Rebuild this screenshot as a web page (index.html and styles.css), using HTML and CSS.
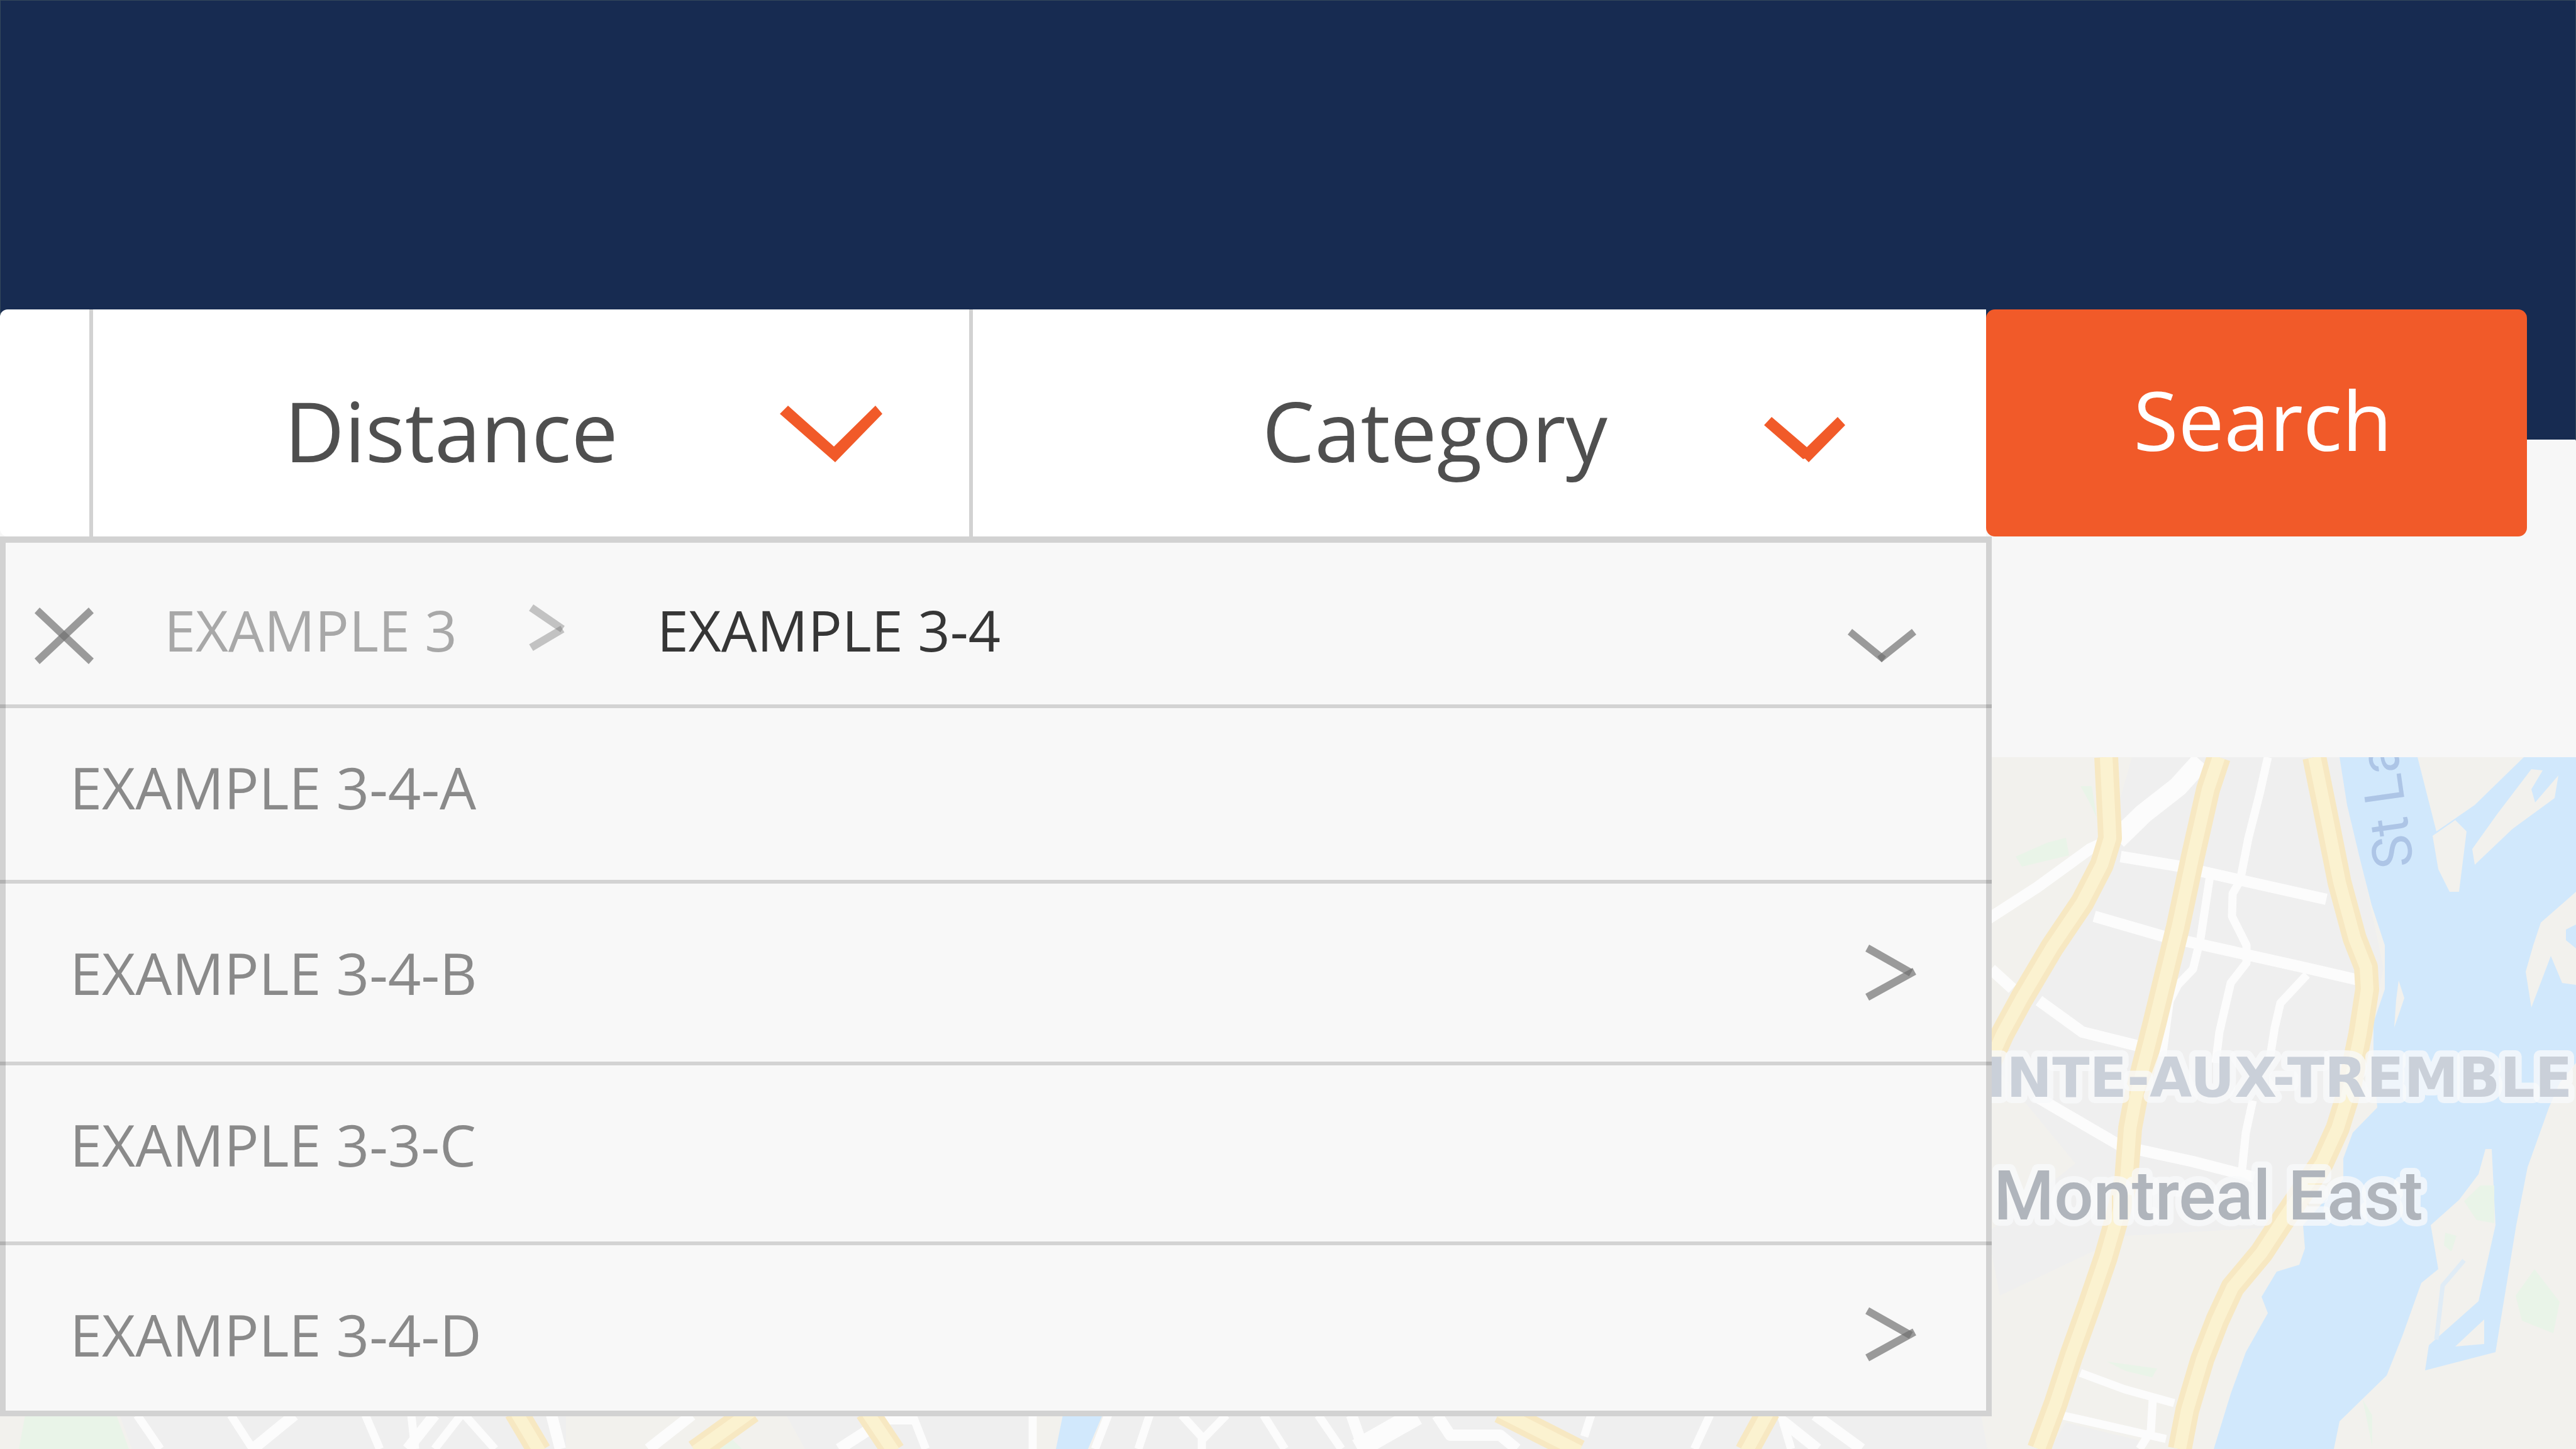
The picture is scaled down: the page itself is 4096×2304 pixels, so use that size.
FILE: index.html
```html
<!DOCTYPE html>
<html lang="en">
<head>
<meta charset="utf-8">
<title>Category search</title>
<link rel="stylesheet" href="styles.css">
</head>
<body>
<div class="page">
  <header class="hero"></header>

  <section class="map" aria-label="Map">
    <svg class="map-canvas" viewBox="0 1204 4096 1100" preserveAspectRatio="xMinYMin slice">
      <rect class="land" x="0" y="1204" width="4096" height="1100"/>
      <!-- built-up areas -->
      <path class="urban" d="M3390 1204H3720L3790 1540L3740 1760L3640 1950L3380 1965L3180 2060L3160 1960L3300 1850L3160 1680L3340 1380Z"/>
      <path class="urban" d="M190 2250H900V2304H210ZM1250 2250H1640V2304H1280ZM1760 2250H3150L3160 2304H1740Z"/>
      <path class="urban" d="M3285 2262L3400 2290V2304H3260Z"/>
      <!-- parks -->
      <path class="park" d="M40 2250H185L205 2304H30ZM3255 1340L3285 1332L3290 1360L3215 1378L3205 1362ZM3308 1250H3326L3334 1300L3322 1275ZM3350 2165L3430 2176L3422 2190L3380 2180ZM4000 2060L4030 2018L4070 2070L4060 2120L4010 2100ZM3757 2226L3772 2250V2300ZM1150 2275L1120 2304H1180Z"/>
      <!-- river -->
      <path class="water" d="M3720 1204L3732 1280L3753 1368L3771 1439L3792 1503V1573L3774 1626V1687L3780 1761L3741 1801L3726 1842V1875L3662 1948L3665 1985L3656 2011L3620 2022L3596 2062L3606 2088L3571 2150L3547 2216L3520 2304H3711L3720 2260L3795 2187L3820 2124L3850 2040L3877 2018L3865 1948L3910 1908L3941 1867L3952 1827H3962L3968 1948L3941 2069L3862 2139L3856 2179L3968 2150L3986 2040L4001 1948L4019 1856L4053 1761L4070 1722L4096 1690V1566L4074 1563L4056 1520L4025 1602L4016 1545L4028 1503L4040 1467L4096 1418V1204H4013L3935 1280L3874 1322L3844 1204Z"/>
      <path class="water" d="M1690 2250H1753L1730 2304H1679ZM4096 1470L4080 1478V1495L4096 1508Z"/>
      <path class="creek" d="M3918 2004L3884 2044L3874 2130"/>
      <path class="land" d="M3868 1329L3904 1304L3922 1322L3910 1418H3895L3877 1382ZM4025 1223L4043 1225L4025 1255L4031 1276L4068 1233L4062 1269L3995 1318L3935 1375L3931 1350L3971 1294ZM3814 1559L3823 1587L3807 1634L3810 1590ZM3950 2098V2137L3904 2141Z"/>
      <path class="park" d="M3944 1885H3966V1945L3938 1940L3918 1910ZM3888 1960L3906 1965L3898 1990L3886 1980Z"/>
      <!-- streets -->
      <g class="street">
        <path class="wide" d="M3500 1210L3463 1251L3408 1294L3366 1335"/>
        <path d="M3378 1325L3323 1350L3239 1411L3160 1462M3166 1541L3200 1572M3372 1362L3463 1377L3565 1400L3699 1430M3330 1457L3444 1490L3487 1499L3662 1538L3753 1559M3242 1591L3311 1641L3408 1665M3235 1742L3293 1776L3372 1822L3487 1847L3584 1872"/>
        <path class="thin" d="M3606 1204L3593 1262L3575 1333L3562 1400L3550 1421L3549 1457L3572 1503V1531L3547 1563L3529 1641L3523 1690M3514 1393L3499 1492L3487 1541L3463 1566L3450 1591L3438 1680M3668 1550L3626 1595L3617 1634L3608 1690M3582 1750L3571 1801L3565 1860M3308 2183L3378 2209L3457 2231M3281 2251L3444 2288M3423 2225L3420 2275L3402 2304"/>
        <path class="thin" d="M218 2250L255 2304M367 2250L402 2304M581 2250L604 2304M654 2250L660 2304M739 2250L787 2304M733 2250L691 2304M1451 2250L1472 2304M1642 2250V2304M1762 2250L1741 2304M1828 2250L1810 2304M1879 2250L1911 2285V2304M1950 2250L1911 2290M2009 2250L2043 2304M2096 2250L2133 2304M2530 2250L2519 2284M2719 2250L2694 2304M2832 2250L2848 2304"/>
        <path d="M468 2250L402 2304M691 2250L648 2304M877 2250L891 2304M1100 2250L1031 2304M1382 2273L1334 2304M1400 2256H1451M2149 2250L2168 2304M2285 2250L2306 2282H2385L2412 2304M2886 2250L2960 2304M2835 2260L2890 2304"/>
        <path class="wide" d="M2253 2250L2158 2304"/>
      </g>
      <!-- main roads: casing, then the fill -->
      <g class="road-casing">
        <path d="M3349 1204L3354 1308L3355 1333L3342 1375L3311 1435L3263 1506L3215 1587L3184 1644L3150 1720"/>
        <path d="M3528 1204L3511 1255L3487 1361L3463 1474L3450 1527L3426 1626L3408 1697L3396 1746L3387 1794L3381 1875L3367 1934L3348 2000L3323 2073L3293 2157L3269 2231L3242 2304"/>
        <path d="M3680 1204L3696 1283L3720 1403L3744 1492L3762 1538L3764 1573L3753 1644L3732 1746L3717 1794L3692 1849L3632 1937L3596 1992L3550 2047L3526 2099L3502 2161L3478 2242L3466 2304"/>
        <path d="M820 2244L858 2308M1195 2244L1106 2308M1378 2244L1421 2308M2385 2244L2511 2308M2812 2244L2777 2308"/>
      </g>
      <g class="road">
        <path d="M3349 1204L3354 1308L3355 1333L3342 1375L3311 1435L3263 1506L3215 1587L3184 1644L3150 1720"/>
        <path d="M3528 1204L3511 1255L3487 1361L3463 1474L3450 1527L3426 1626L3408 1697L3396 1746L3387 1794L3381 1875L3367 1934L3348 2000L3323 2073L3293 2157L3269 2231L3242 2304"/>
        <path d="M3680 1204L3696 1283L3720 1403L3744 1492L3762 1538L3764 1573L3753 1644L3732 1746L3717 1794L3692 1849L3632 1937L3596 1992L3550 2047L3526 2099L3502 2161L3478 2242L3466 2304"/>
        <path d="M820 2244L858 2308M1195 2244L1106 2308M1378 2244L1421 2308M2385 2244L2511 2308M2812 2244L2777 2308"/>
      </g>
      <!-- place names -->
      <text class="river-name" transform="translate(3838 1376) rotate(-98)">St La</text>
      <text class="district" x="3158" y="1744">INTE-AUX-TREMBLE</text>
      <text class="town" x="3170" y="1939">Montreal East</text>
    </svg>
  </section>

  <main class="finder">
    <div class="field field-start"></div>
    <label class="field field-distance">
      <select class="field-select" aria-label="Distance"><option>Distance</option></select>
      <svg class="chevron-large" viewBox="1240 646 163 90" aria-hidden="true"><path d="M1240 659L1253 646L1326 711L1392 646L1403 659L1328 736Z"/></svg>
    </label>
    <button class="field field-category" type="button" aria-expanded="true">
      <span>Category</span>
      <svg class="chevron-medium" viewBox="2805 664 129 72" aria-hidden="true"><path d="M2805 677L2817 664L2873 712L2922 664L2934 677L2876 736L2870 730L2867 731Z"/></svg>
    </button>
    <button class="search" type="submit">Search</button>

    <nav class="panel" aria-label="Categories">
      <div class="row crumbs">
        <button class="icon-button" type="button" aria-label="Close"><svg class="close" viewBox="55 967 94 90"><path d="M55 976L63 967L149 1048L141 1057Z"/><path d="M149 976L141 967L55 1048L63 1057Z"/></svg></button>
        <a class="crumb" href="#">EXAMPLE 3</a>
        <svg class="crumb-arrow" viewBox="189 171 276 360" aria-hidden="true"><path d="M189 221L223 171L465 338L432 386Z"/><path d="M190 480L221 531L463 387L433 336Z"/></svg>
        <a class="crumb current" href="#" aria-current="page">EXAMPLE 3-4</a>
        <button class="icon-button collapse" type="button" aria-label="Collapse"><svg class="chevron-small" viewBox="2939 1001 109 53"><path d="M2939 1010L2946 1001L3000 1045L2993 1054Z"/><path d="M3048 1010L3041 1001L2986 1045L2993 1054Z"/></svg></button>
      </div>
      <a class="row item" href="#">EXAMPLE 3-4-A</a>
      <a class="row item branch" href="#">EXAMPLE 3-4-B
        <svg class="arrow" viewBox="168 98 393 433" aria-hidden="true"><path d="M168 151L197 98L535 290L506 342Z"/><path d="M168 479L197 531L561 330L533 278Z"/></svg>
      </a>
      <a class="row item" href="#">EXAMPLE 3-3-C</a>
      <a class="row item branch" href="#">EXAMPLE 3-4-D
        <svg class="arrow" viewBox="168 99 393 433" aria-hidden="true"><path d="M168 159L197 107L535 299L506 351Z"/><path d="M168 473L197 525L561 324L533 272Z"/></svg>
      </a>
    </nav>
  </main>
</div>
</body>
</html>
```
FILE: styles.css
```css
* {
  box-sizing: border-box;
}

body {
  margin: 0;
  background: #f7f7f7;
  font-family: "Open Sans", "Noto Sans", sans-serif;
}

.page {
  display: grid;
  grid-template-rows: 701px 503px minmax(1100px, 1fr);
  min-height: 100vh;
  overflow: hidden;
}

.hero {
  grid-area: 1 / 1;
  background: #172b51;
  border: 1px solid #35485a;
  border-bottom: 2px solid #ffffff;
}

.map {
  grid-area: 3 / 1;
  display: flex;
  min-height: 0;
  border-bottom: 1px solid #aaaaaa;
}

.map-canvas {
  width: 100%;
  height: 100%;
}

.land { fill: #f2f1ed; }
.urban { fill: #efefef; }
.park { fill: #e9f4e8; }
.water { fill: #d1e8fc; }

.creek {
  fill: none;
  stroke: #e0ecf6;
  stroke-width: 7;
}

.street {
  fill: none;
  stroke: #fcfcfc;
  stroke-width: 18;
  stroke-linejoin: round;
}

.street .wide { stroke-width: 32; }
.street .thin { stroke-width: 13; }

.road-casing,
.road {
  fill: none;
  stroke: #f7e8c2;
  stroke-width: 38;
  stroke-linejoin: round;
}

.road {
  stroke: #fbf2d0;
  stroke-width: 20;
}

.river-name,
.district,
.town {
  font-family: Roboto, sans-serif;
}

.river-name {
  fill: #adc5e6;
  font-size: 88px;
}

.district,
.town {
  stroke: #f8fafb;
  stroke-opacity: 0.75;
  stroke-width: 20px;
  stroke-linejoin: round;
  paint-order: stroke;
}

.district {
  fill: #cad0d9;
  font-family: "DejaVu Sans", sans-serif;
  font-size: 87px;
  font-weight: 700;
}

.town {
  fill: #b0b5bc;
  font-size: 110px;
  font-weight: 500;
}

.finder {
  grid-area: 1 / 1 / 4 / 2;
  display: grid;
  grid-template-columns: 148px 1399fr 1611fr 860fr;
  grid-template-rows: 361px auto;
  align-content: start;
  padding: 492px 78px 0 0;
  z-index: 1;
}

.field {
  display: flex;
  align-items: baseline;
  justify-content: space-between;
  margin: 0;
  padding: 99px 0 0;
  border: 0;
  border-right: 6px solid #d2d2d2;
  background: #ffffff;
  color: #4f4f4f;
  font: inherit;
  font-size: 132px;
  line-height: 187px;
  text-align: left;
}

.field-start {
  border-radius: 12px 0 0 12px;
}

.field-distance {
  padding-right: 138px;
  padding-left: 304px;
}

.field-category {
  padding-right: 224px;
  padding-left: 460px;
  border-right: 0;
}

.field-select {
  padding: 0;
  border: 0;
  background: none;
  appearance: none;
  color: inherit;
  font: inherit;
}

.chevron-large,
.chevron-medium {
  flex: none;
  fill: #f15a29;
}

.chevron-large { width: 163px; height: 90px; }
.chevron-medium { width: 129px; height: 72px; }

.search {
  padding: 0 0 12px 20px;
  border: 0;
  border-radius: 14px;
  background: #f15a29;
  color: #ffffff;
  font: inherit;
  font-size: 130px;
  line-height: 187px;
}

.panel {
  grid-column: 1 / 4;
  display: grid;
  grid-template-rows: 263px 279px 289px 286px 263px;
  margin-right: -9px;
  border: 9px solid #d2d2d2;
  border-top-width: 10px;
  background: #f8f8f8;
}

.row {
  display: flex;
  margin: 0 -9px;
  padding: 64px 120px 0 111px;
  border-bottom: 6px solid rgba(0, 0, 0, 0.15);
  color: #8a8a8a;
  font-size: 92px;
  line-height: 124px;
  text-decoration: none;
}

.row:last-child {
  border-bottom: 0;
}

.item {
  align-items: flex-start;
  justify-content: space-between;
}

.branch {
  padding-top: 80px;
}

.crumbs {
  align-items: flex-start;
  padding: 76px 120px 0 55px;
  font-size: 90px;
}

.crumb {
  color: #a8a8a8;
  text-decoration: none;
}

.current {
  color: #363636;
}

.icon-button {
  display: flex;
  align-items: flex-end;
  height: 124px;
  margin: 0;
  padding: 0 0 7px;
  border: 0;
  background: none;
}

.icon-button + .crumb {
  margin-left: 112px;
}

.collapse {
  margin-left: auto;
  padding-bottom: 10px;
}

.close { width: 94px; height: 90px; }
.chevron-small { width: 109px; height: 53px; }
.crumb-arrow { width: 57px; height: 74px; margin: 22px 147px 0 114px; }
.arrow { width: 81px; height: 89px; margin-top: 17px; }

.close,
.chevron-small,
.arrow {
  flex: none;
  fill: rgba(112, 112, 112, 0.69);
}

.crumb-arrow {
  flex: none;
  fill: rgba(116, 116, 116, 0.41);
}
```
